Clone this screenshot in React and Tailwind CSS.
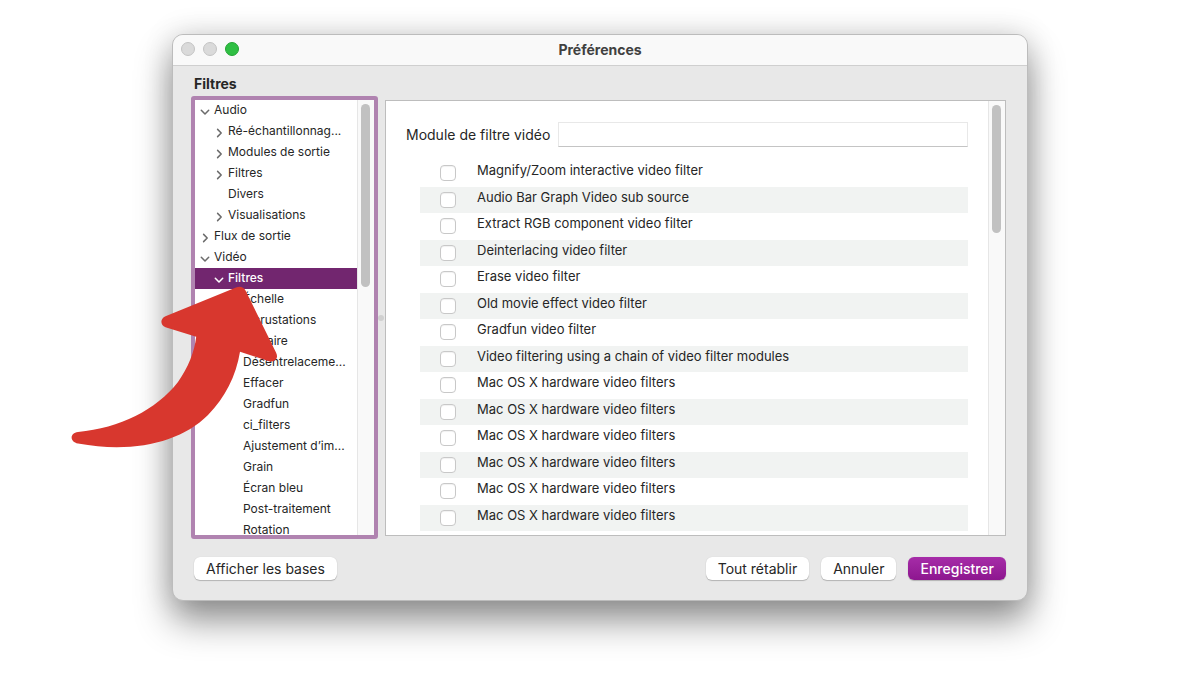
import React, { useState } from 'react';
import clsx from 'clsx';

const TREE = [
  { label: 'Audio', level: 0, state: 'open' },
  { label: 'Ré-échantillonnag...', level: 1, state: 'closed' },
  { label: 'Modules de sortie', level: 1, state: 'closed' },
  { label: 'Filtres', level: 1, state: 'closed' },
  { label: 'Divers', level: 1 },
  { label: 'Visualisations', level: 1, state: 'closed' },
  { label: 'Flux de sortie', level: 0, state: 'closed' },
  { label: 'Vidéo', level: 0, state: 'open' },
  { label: 'Filtres', level: 1, state: 'open' },
  { label: 'Échelle', level: 2 },
  { label: 'Incrustations', level: 2 },
  { label: 'Linéaire', level: 2 },
  { label: 'Désentrelaceme...', level: 2 },
  { label: 'Effacer', level: 2 },
  { label: 'Gradfun', level: 2 },
  { label: 'ci_filters', level: 2 },
  { label: 'Ajustement d’im...', level: 2 },
  { label: 'Grain', level: 2 },
  { label: 'Écran bleu', level: 2 },
  { label: 'Post-traitement', level: 2 },
  { label: 'Rotation', level: 2 },
];

const MODULES = [
  'Magnify/Zoom interactive video filter',
  'Audio Bar Graph Video sub source',
  'Extract RGB component video filter',
  'Deinterlacing video filter',
  'Erase video filter',
  'Old movie effect video filter',
  'Gradfun video filter',
  'Video filtering using a chain of video filter modules',
  'Mac OS X hardware video filters',
  'Mac OS X hardware video filters',
  'Mac OS X hardware video filters',
  'Mac OS X hardware video filters',
  'Mac OS X hardware video filters',
  'Mac OS X hardware video filters',
];

const INDENT = ['pl-[5px]', 'pl-[19px]', 'pl-[34px]'];

function Chevron({ state }) {
  return (
    <svg viewBox="0 0 10 10" className="mt-1 size-[10px] shrink-0" fill="none" stroke="currentColor" strokeWidth="1.5" strokeLinecap="round" strokeLinejoin="round" aria-hidden="true">
      {state === 'open' && <path d="M1.3 3.2 L5 7 L8.7 3.2" />}
      {state === 'closed' && <path d="M3.6 1.4 L7.2 5 L3.6 8.6" />}
    </svg>
  );
}

function Scrollbar({ className, thumb }) {
  return (
    <div className={clsx('shrink-0 border-l border-[#e6e6e6] bg-[#f9f9f9] pl-[3px] pt-1', className)}>
      <div className={clsx('w-[9px] rounded-full bg-[#c1c1c1]', thumb)} />
    </div>
  );
}

function Tree({ selected, onSelect }) {
  return (
    <nav aria-label="Filtres" className="flex h-[443px] w-[187px] shrink-0 overflow-hidden rounded-[3px] border-4 border-[#b083b0] bg-white">
      <ul className="min-w-0 flex-1">
        {TREE.map((item, i) => (
          <li key={i}>
            <button
              type="button"
              onClick={() => onSelect(i)}
              className={clsx(
                'flex h-[21px] w-full items-center gap-1 whitespace-nowrap pb-[2px] text-left text-[12px]',
                INDENT[item.level],
                i === selected ? 'bg-[#72266f] font-medium text-white' : 'text-[#262626]'
              )}
            >
              <span className={i === selected ? 'text-white' : 'text-[#6b6b6b]'}>
                <Chevron state={item.state} />
              </span>
              {item.label}
            </button>
          </li>
        ))}
      </ul>
      <Scrollbar className="w-[17px]" thumb="h-[183px]" />
    </nav>
  );
}

function ModulePanel() {
  const [value, setValue] = useState('');

  return (
    <section className="flex h-[436px] min-w-0 flex-1 overflow-hidden border border-[#bdbdbd] bg-white">
      <div className="min-w-0 flex-1 px-5 pt-[21px]">
        <div className="flex items-center gap-2">
          <label htmlFor="module" className="whitespace-nowrap text-[14px]">Module de filtre vidéo</label>
          <input
            id="module"
            type="text"
            value={value}
            onChange={(e) => setValue(e.target.value)}
            className="h-[25px] min-w-0 flex-1 border border-[#e8e8e8] border-b-[#c4c4c4] bg-white px-1 text-[13px] outline-none"
          />
        </div>
        <ul className="ml-[14px] mt-[13px]">
          {MODULES.map((name, i) => (
            <li key={i} className="h-[27px] even:h-[26px] even:bg-[#f1f3f2]">
              <label className="flex h-full pl-5 text-[13px] leading-5">
                <input type="checkbox" className="mr-[21px] mt-[5px] size-4 shrink-0 appearance-none rounded-[4px] border border-[#c8c8c8] bg-white shadow-[inset_0_1px_1px_rgba(0,0,0,0.06)] checked:bg-[#961d99]" />
                {name}
              </label>
            </li>
          ))}
        </ul>
      </div>
      <Scrollbar className="w-[17px]" thumb="h-[128px]" />
    </section>
  );
}

function Button({ primary, children }) {
  return (
    <button
      type="button"
      className={clsx(
        'h-[23px] whitespace-nowrap rounded-[6px] px-3 text-[14px] leading-none shadow-[0_1px_1px_rgba(0,0,0,0.22),0_0_1px_rgba(0,0,0,0.15)]',
        primary ? 'bg-linear-to-b from-[#a62ca8] to-[#8d168f] font-medium text-white' : 'bg-white text-[#262626]'
      )}
    >
      {children}
    </button>
  );
}

function Arrow() {
  return (
    <svg viewBox="70 284 210 168" className="pointer-events-none absolute -left-[103px] top-[249px] h-[168px] w-[210px]" fill="#d8372e" aria-hidden="true">
      <path d="M236 287.6 C240 286 243.5 287 245.5 290.5 L276 352.5 C279 358.5 275 362.5 269 361.2 L240 351.8 C236 376 225 398 208 415 C180 443 132 453.5 78 443.6 C69.5 442 69.5 433 78 432 C120 428 156 410 178 382 C188 368 194.5 352 196.2 336.8 L165.5 327.2 C160 325 160 318.5 165.5 316.2 Z" />
    </svg>
  );
}

export default function App() {
  const [selected, setSelected] = useState(8);

  return (
    <div className="min-h-screen overflow-hidden bg-white px-6 pb-[74px] pt-[34px] font-['Inter','Liberation_Sans',sans-serif] text-[#262626]">
      <main className="relative mx-auto max-w-[856px] rounded-[11px] border border-[#bcbcbc] bg-[#e8e8e8] shadow-[0_20px_36px_rgba(0,0,0,0.42),0_0_30px_rgba(0,0,0,0.14)]">
        <header className="grid h-[31px] grid-cols-[1fr_auto_1fr] items-center rounded-t-[10px] border-b border-[#cfcfcf] bg-[#f9f9f9] px-2 pb-[2px]">
          <div className="flex gap-2">
            <button type="button" aria-label="Fermer" className="size-[14px] rounded-full border border-[#c4c4c4] bg-[#dadada]" />
            <button type="button" aria-label="Réduire" className="size-[14px] rounded-full border border-[#c4c4c4] bg-[#dadada]" />
            <button type="button" aria-label="Agrandir" className="size-[14px] rounded-full border border-[#24a535] bg-[#2fbf43]" />
          </div>
          <h1 className="text-[14px] font-bold text-[#404040]">Préférences</h1>
        </header>

        <div className="pb-5 pl-[18px] pr-[21px] pt-2">
          <h2 className="pl-[3px] text-[14px] font-bold leading-5">Filtres</h2>
          <div className="mt-[2px] flex items-center">
            <Tree selected={selected} onSelect={setSelected} />
            <div className="flex w-[7px] shrink-0 items-center">
              <span className="size-[6px] rounded-full bg-[#d0d0d0]" />
            </div>
            <ModulePanel />
          </div>
          <footer className="mt-[18px] flex items-center gap-3 pl-[3px]">
            <Button>Afficher les bases</Button>
            <div className="ml-auto flex gap-3">
              <Button>Tout rétablir</Button>
              <Button>Annuler</Button>
              <Button primary>Enregistrer</Button>
            </div>
          </footer>
        </div>
        <Arrow />
      </main>
    </div>
  );
}
